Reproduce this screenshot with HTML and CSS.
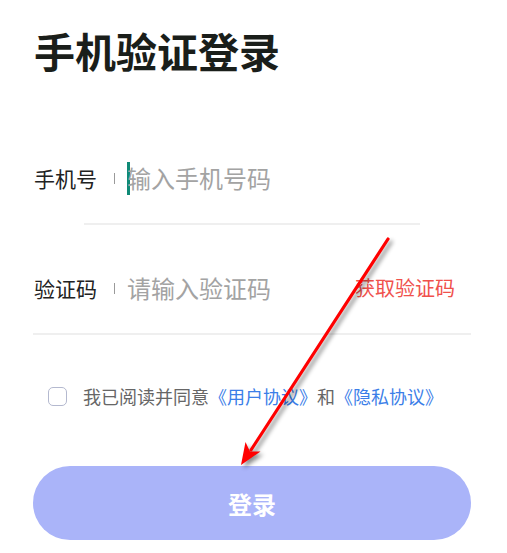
FILE: index.html
```html
<!DOCTYPE html>
<html lang="zh-CN">
<head>
<meta charset="utf-8">
<title>手机验证登录</title>
<link rel="stylesheet" href="styles.css">
</head>
<body>
<div class="page">
  <h1 class="title">手机验证登录</h1>
  <div class="row row-phone">
    <span class="label">手机号</span>
    <span class="sep"></span>
    <span class="cursor"></span>
    <span class="placeholder">输入手机号码</span>
  </div>
  <div class="divider divider-short"></div>
  <div class="row row-code">
    <span class="label">验证码</span>
    <span class="sep"></span>
    <span class="placeholder ph-code">请输入验证码</span>
    <span class="get-code">获取验证码</span>
  </div>
  <div class="divider divider-full"></div>
  <div class="agree">
    <span class="checkbox"></span>
    <span class="agree-text">我已阅读并同意<span class="link">《用户协议》</span>和<span class="link">《隐私协议》</span></span>
  </div>
  <button class="login-btn">登录</button>
  <svg class="arrow" width="507" height="553" viewBox="0 0 507 553">
    <line x1="388" y1="239" x2="251" y2="450" stroke="#ff0000" stroke-width="3.2" stroke-linecap="round"/>
    <polygon points="241,465 245.5,442 250,451.5 260.5,451.5" fill="#ff0000"/>
  </svg>
</div>
</body>
</html>
```

FILE: styles.css
```css
html, body {
  margin: 0;
  padding: 0;
  background: #ffffff;
}

body {
  font-family: "Noto Sans CJK SC", "Noto Sans", sans-serif;
  width: 507px;
  height: 553px;
  overflow: hidden;
}

.page {
  position: relative;
  width: 507px;
  height: 553px;
  box-sizing: border-box;
  padding: 30px 36px 0 33px;
}

.title {
  margin: 0;
  font-size: 41px;
  line-height: 40px;
  height: 40px;
  font-weight: 700;
  color: #1a1e1a;
  padding-left: 1px;
}

.row {
  display: flex;
  align-items: center;
  height: 40px;
  padding-left: 1px;
}

.row-phone {
  margin-top: 88px;
}

.row-code {
  margin-top: 43px;
}

.label {
  font-size: 21px;
  line-height: 40px;
  color: #222222;
  width: 80px;
  flex: none;
}

.sep {
  width: 1px;
  height: 11px;
  background: #9a9a9a;
  flex: none;
}

.cursor {
  width: 3px;
  height: 33px;
  background: #0f8a76;
  margin-left: 12px;
  flex: none;
}

.placeholder {
  font-size: 24px;
  line-height: 40px;
  color: #a3a3a3;
  margin-left: -3px;
}

.ph-code {
  margin-left: 12px;
}

.get-code {
  margin-left: auto;
  margin-right: 16px;
  font-size: 20px;
  line-height: 40px;
  color: #f0514c;
}

.divider {
  height: 2px;
  background: #efefef;
  margin-top: 25px;
}

.divider-short {
  margin-left: 51px;
  margin-right: 51px;
}

.divider-full {
  margin-left: 0;
  margin-right: 0;
}

.agree {
  display: flex;
  align-items: center;
  height: 40px;
  margin-top: 41px;
  padding-left: 15px;
}

.checkbox {
  width: 17px;
  height: 17px;
  border: 1.5px solid #b4b9cf;
  border-radius: 5px;
  flex: none;
}

.agree-text {
  margin-left: 16px;
  font-size: 18px;
  line-height: 40px;
  color: #666666;
  white-space: nowrap;
}

.link {
  color: #3b7ee8;
}

.login-btn {
  display: block;
  margin-top: 50px;
  width: 438px;
  height: 74px;
  border: none;
  border-radius: 37px;
  background: #aab4f9;
  color: #ffffff;
  font-family: "Noto Sans CJK SC", "Noto Sans", sans-serif;
  font-size: 24px;
  font-weight: 700;
  padding: 0;
}

.arrow {
  position: absolute;
  left: 0;
  top: 0;
  pointer-events: none;
  filter: drop-shadow(3px 3px 2px rgba(0, 0, 0, 0.45));
}
```
